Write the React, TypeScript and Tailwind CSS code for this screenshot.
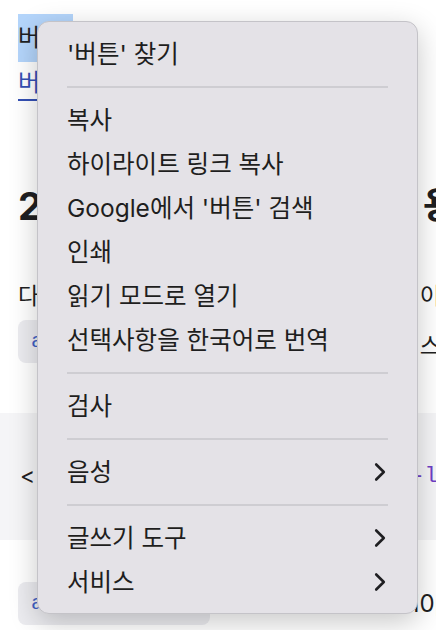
import React from "react";

const font = { fontFamily: 'Inter, "Noto Sans CJK KR", sans-serif' };
const mono = { fontFamily: '"Liberation Mono", monospace' };

const Chevron = () => (
  <svg width="12" height="20" viewBox="0 0 12 20" fill="none" className="shrink-0">
    <polyline
      points="2.2,2.5 9.8,10 2.2,17.5"
      stroke="#1f1f22"
      strokeWidth="2.6"
      strokeLinecap="round"
      strokeLinejoin="round"
    />
  </svg>
);

const Item = ({ label, sub }: { label: string; sub?: boolean }) => (
  <div className="flex h-[44px] items-center justify-between pl-[29px] pr-[31px] text-[24.5px] text-[#1e1e20]">
    <span>{label}</span>
    {sub && <Chevron />}
  </div>
);

const Sep = () => (
  <div className="flex h-[22px] items-center px-[29px]">
    <div className="h-[2px] w-full bg-[#cecdd2]" />
  </div>
);

const ContextMenu = () => (
  <div className="absolute left-[37px] top-[21px] w-[381px] rounded-[12px] border border-[#c4c3c8] bg-[#e4e2e7] pb-[9px] pt-[10px] shadow-[0_8px_28px_rgba(0,0,0,0.22)]">
    <Item label="'버튼' 찾기" />
    <Sep />
    <Item label="복사" />
    <Item label="하이라이트 링크 복사" />
    <Item label="Google에서 '버튼' 검색" />
    <Item label="인쇄" />
    <Item label="읽기 모드로 열기" />
    <Item label="선택사항을 한국어로 번역" />
    <Sep />
    <Item label="검사" />
    <Sep />
    <Item label="음성" sub />
    <Sep />
    <Item label="글쓰기 도구" sub />
    <Item label="서비스" sub />
  </div>
);

const Chip = ({ children }: { children: React.ReactNode }) => (
  <span
    className="inline-flex h-[43px] w-[192px] shrink-0 items-center rounded-[8px] bg-[#ececf0] px-[13px] text-[21px] text-[#3f5fc4]"
    style={mono}
  >
    {children}
  </span>
);

export default function App() {
  return (
    <div className="relative h-[630px] w-[436px] overflow-hidden bg-white text-[#1f1f22]" style={font}>
      <div className="flex flex-col">
        <div className="pl-[18px] pt-[14px]">
          <span className="inline-block h-[48px] w-[55px] bg-[#b4d5fb] text-[24px] leading-[48px]">버튼</span>
        </div>
        <div className="pl-[18px] pt-[6px]">
          <span className="text-[24px] leading-[30px] text-[#3450b4] underline decoration-2 underline-offset-[8px]">
            버튼 컴포넌트
          </span>
        </div>
        <div className="mt-[86px] flex w-[457px] items-center justify-between pl-[18px]">
          <span className="text-[38px] font-bold leading-[44px]">2. 버튼</span>
          <span className="text-[37px] font-bold leading-[44px]">용</span>
        </div>
        <div className="mt-[52px] flex w-[441px] items-center justify-between pl-[18px] text-[23px] leading-[32px]">
          <span>다양한</span>
          <span>이</span>
        </div>
        <div className="mt-[8px] flex h-[43px] w-[441px] items-start justify-between pl-[18px] text-[23px]">
          <Chip>as</Chip>
          <span className="pt-[12px] leading-[28px]">스</span>
        </div>
        <div className="mt-[50px] flex h-[127px] w-[451px] items-center justify-between bg-[#f5f5f7] pl-[20px]">
          <span className="text-[23px]">&lt;</span>
          <span className="text-[22px] text-[#6e3fc6]" style={mono}>
            -lg
          </span>
        </div>
        <div className="mt-[42px] flex h-[43px] w-[462px] items-center justify-between pl-[18px]">
          <Chip>as</Chip>
          <span className="text-[24px]">10px</span>
        </div>
      </div>
      <ContextMenu />
    </div>
  );
}
